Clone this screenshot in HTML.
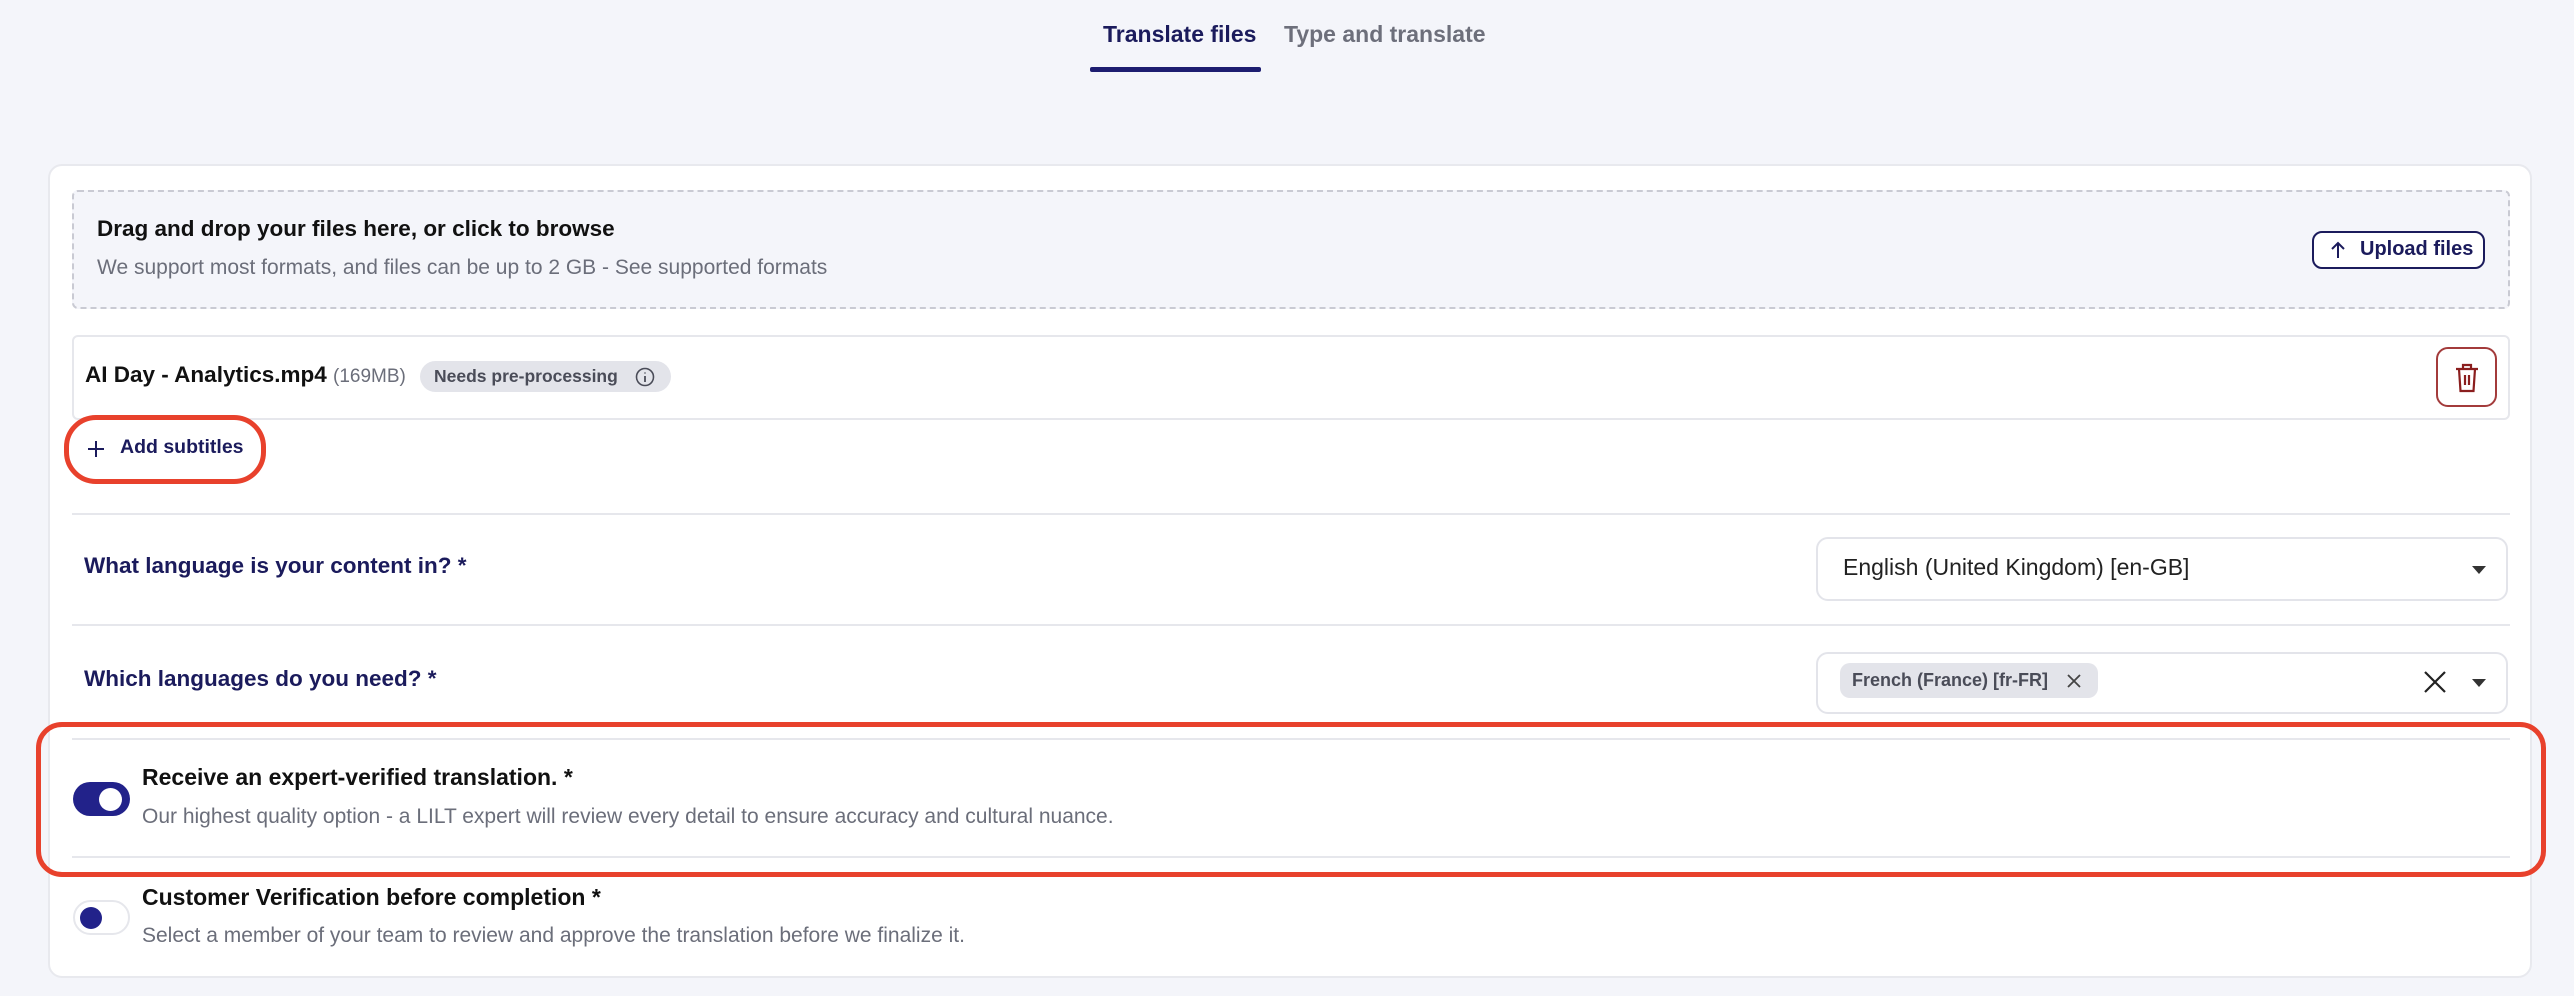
<!DOCTYPE html>
<html><head><meta charset="utf-8"><style>
*{box-sizing:border-box;margin:0;padding:0}
body{width:2574px;height:996px;background:#f4f5fa;font-family:"Liberation Sans",Arial,sans-serif;position:relative;overflow:hidden}
.a{position:absolute}
.lbl{font-weight:bold;font-size:22.5px;color:#1b1b5c}
.sub{font-size:21px;color:#6b6e7a}
.hr{position:absolute;left:72px;width:2438px;height:2px;background:#e6e7ec}
.sel{position:absolute;left:1816px;width:692px;background:#fff;border:2px solid #e3e4ea;border-radius:12px}
.tri{position:absolute;width:0;height:0;border-left:7px solid transparent;border-right:7px solid transparent;border-top:8px solid #333}
</style></head><body>
<div class="a" style="left:1103px;top:21px;font-size:23px;font-weight:bold;color:#1b1b5c">Translate files</div>
<div class="a" style="left:1090px;top:67px;width:171px;height:5px;background:#1d1d70;border-radius:2px"></div>
<div class="a" style="left:1284px;top:21px;font-size:23px;font-weight:bold;color:#6d6f7b">Type and translate</div>

<div class="a" style="left:48px;top:164px;width:2484px;height:814px;background:#fff;border:2px solid #e8e9ee;border-radius:14px"></div>

<div class="a" style="left:72px;top:190px;width:2438px;height:119px;background:#f4f5fa;border:2px dashed #c9cad3;border-radius:6px"></div>
<div class="a" style="left:97px;top:216px;font-size:22.5px;font-weight:bold;color:#111">Drag and drop your files here, or click to browse</div>
<div class="a sub" style="left:97px;top:256px">We support most formats, and files can be up to 2 GB - See supported formats</div>
<div class="a" style="left:2312px;top:231px;width:173px;height:38px;border:2px solid #1b1b5c;border-radius:10px;background:#fff"></div>
<svg class="a" style="left:2327px;top:238px" width="22" height="24" viewBox="0 0 22 24"><path d="M11 20V5M5 11l6-6 6 6" stroke="#1b1b5c" stroke-width="2" fill="none"/></svg>
<div class="a" style="left:2360px;top:238px;font-size:20px;font-weight:bold;color:#1b1b5c">Upload files</div>

<div class="a" style="left:72px;top:335px;width:2438px;height:85px;border:2px solid #e6e7ec;border-radius:6px"></div>
<div class="a" style="left:85px;top:362px;font-size:22.5px;font-weight:bold;color:#111">AI Day - Analytics.mp4 <span style="font-weight:normal;font-size:19px;color:#6b6e7a">(169MB)</span></div>
<div class="a" style="left:420px;top:361px;width:251px;height:31px;background:#e3e4ea;border-radius:16px"></div>
<div class="a" style="left:434px;top:366px;font-size:17.5px;font-weight:bold;color:#4a4c58">Needs pre-processing</div>
<svg class="a" style="left:634px;top:366px" width="22" height="22" viewBox="0 0 22 22"><circle cx="11" cy="11" r="8.5" stroke="#4a4c58" stroke-width="1.6" fill="none"/><path d="M11 10v6M11 6.5v1" stroke="#4a4c58" stroke-width="1.8"/></svg>
<div class="a" style="left:2436px;top:347px;width:61px;height:60px;border:2px solid #a33b3b;border-radius:12px"></div>
<svg class="a" style="left:2452px;top:362px" width="30" height="32" viewBox="0 0 30 32"><path d="M4 7h22M11 7V3h8v4M7 7l1.5 22h13L23 7M13 13v10M17 13v10" stroke="#8b1e1e" stroke-width="2.2" fill="none"/></svg>

<svg class="a" style="left:86px;top:439px" width="20" height="20" viewBox="0 0 20 20"><path d="M10 2v16M2 10h16" stroke="#1b1b5c" stroke-width="2"/></svg>
<div class="a" style="left:120px;top:436px;font-size:19.5px;font-weight:bold;color:#1b1b5c">Add subtitles</div>
<div class="a" style="left:64px;top:415px;width:202px;height:69px;border:5px solid #e8412c;border-radius:32px"></div>

<div class="hr" style="top:513px"></div>
<div class="a lbl" style="left:84px;top:553px">What language is your content in? *</div>
<div class="sel" style="top:537px;height:64px"></div>
<div class="a" style="left:1843px;top:554px;font-size:23px;color:#222">English (United Kingdom) [en-GB]</div>
<div class="tri" style="left:2472px;top:566px"></div>

<div class="hr" style="top:624px"></div>
<div class="a lbl" style="left:84px;top:666px">Which languages do you need? *</div>
<div class="sel" style="top:652px;height:62px"></div>
<div class="a" style="left:1840px;top:663px;width:258px;height:35px;background:#e3e4ea;border-radius:10px"></div>
<div class="a" style="left:1852px;top:670px;font-size:18px;font-weight:bold;color:#4a4c58">French (France) [fr-FR]</div>
<svg class="a" style="left:2066px;top:673px" width="16" height="16" viewBox="0 0 16 16"><path d="M2 2l12 12M14 2L2 14" stroke="#444" stroke-width="1.8"/></svg>
<svg class="a" style="left:2423px;top:670px" width="24" height="24" viewBox="0 0 24 24"><path d="M2 2l20 20M22 2L2 22" stroke="#222" stroke-width="2.2"/></svg>
<div class="tri" style="left:2472px;top:679px"></div>

<div class="hr" style="top:738px"></div>
<div class="hr" style="top:856px"></div>
<div class="a" style="left:36px;top:722px;width:2510px;height:155px;border:5px solid #e8412c;border-radius:26px"></div>
<div class="a" style="left:73px;top:782px;width:57px;height:34px;background:#22228a;border-radius:17px"></div>
<div class="a" style="left:99px;top:788px;width:23px;height:23px;background:#fff;border-radius:50%"></div>
<div class="a" style="left:142px;top:764px;font-size:23px;font-weight:bold;color:#111">Receive an expert-verified translation. *</div>
<div class="a sub" style="left:142px;top:805px">Our highest quality option - a LILT expert will review every detail to ensure accuracy and cultural nuance.</div>

<div class="a" style="left:73px;top:900px;width:57px;height:35px;background:#fff;border:2px solid #e6e7ec;border-radius:18px"></div>
<div class="a" style="left:80px;top:907px;width:22px;height:22px;background:#22228a;border-radius:50%"></div>
<div class="a" style="left:142px;top:884px;font-size:23px;font-weight:bold;color:#111">Customer Verification before completion *</div>
<div class="a sub" style="left:142px;top:924px">Select a member of your team to review and approve the translation before we finalize it.</div>
</body></html>
